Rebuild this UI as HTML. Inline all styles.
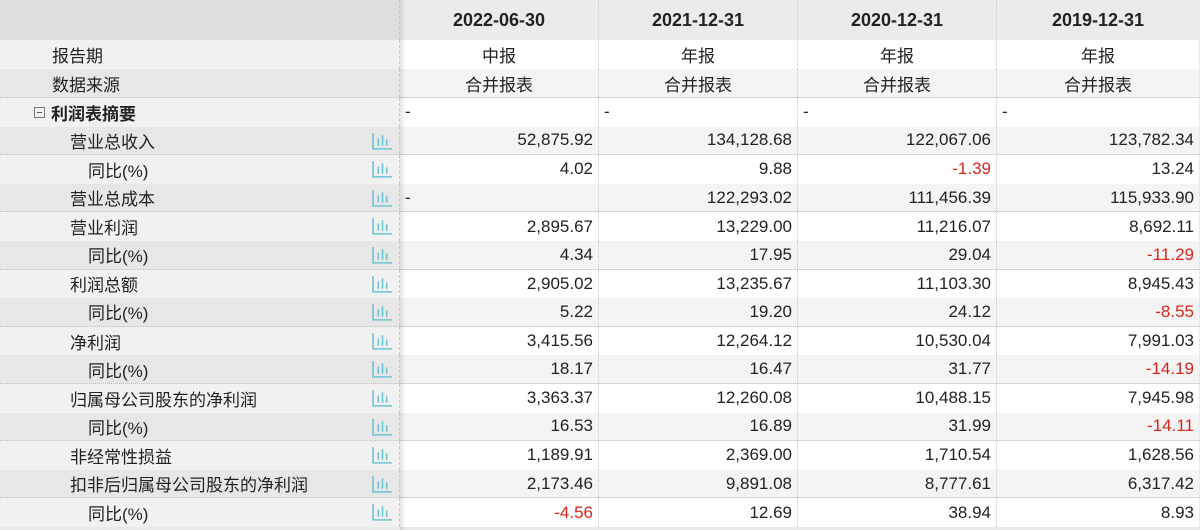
<!DOCTYPE html>
<html><head><meta charset="utf-8"><style>
*{margin:0;padding:0;box-sizing:border-box}
body{width:1200px;height:530px;background:#e9e9e9;font-family:"Liberation Sans","Noto Sans CJK SC",sans-serif;font-size:17px;color:#222;overflow:hidden;position:relative}
.r{position:absolute;left:0;width:1200px;display:flex}
.r>div{height:100%;display:flex;align-items:center}
.l{width:400px;position:relative;border-right:1px dashed #c8c8c8}
.c{width:199px;justify-content:flex-end;padding-right:5px;border-right:1px dotted #ccc}
.c:last-child{border-right:none;width:202px}
.cc{justify-content:center;padding-right:0}
.w .l{background:#f1f1f1}.w .c{background:#fff}
.g .l{background:#e7e7e7}.g .c{background:#f4f4f4}
.g{border-bottom:1px dotted #c0c0c0}
.neg{color:#d4261c}
.ic{position:absolute;left:372px;top:5px;width:21px;height:18px}
.dash{justify-content:flex-start!important;padding-left:5px}
#sh{position:absolute;left:400px;top:0;width:6px;height:530px;background:linear-gradient(90deg,rgba(0,0,0,.10),rgba(0,0,0,0))}
</style></head><body>
<div class="r" style="top:0;height:40px;font-weight:bold;font-size:18px">
<div class="l" style="background:#dedede"></div>
<div class="c cc" style="background:#ebebeb">2022-06-30</div><div class="c cc" style="background:#ebebeb">2021-12-31</div><div class="c cc" style="background:#ebebeb">2020-12-31</div><div class="c cc" style="background:#ebebeb">2019-12-31</div></div>
<div class="r w" style="top:40px;height:29px"><div class="l" style="padding-left:52px">报告期</div><div class="c cc">中报</div><div class="c cc">年报</div><div class="c cc">年报</div><div class="c cc">年报</div></div>
<div class="r g" style="top:69px;height:29px"><div class="l" style="padding-left:52px">数据来源</div><div class="c cc">合并报表</div><div class="c cc">合并报表</div><div class="c cc">合并报表</div><div class="c cc">合并报表</div></div>
<div id="rows"></div>
<div id="sh"></div>
<script>
var d=[
["利润表摘要",0,["-","-","-","-"]],
["营业总收入",1,["52,875.92","134,128.68","122,067.06","123,782.34"]],
["同比(%)",2,["4.02","9.88","-1.39","13.24"]],
["营业总成本",1,["-","122,293.02","111,456.39","115,933.90"]],
["营业利润",1,["2,895.67","13,229.00","11,216.07","8,692.11"]],
["同比(%)",2,["4.34","17.95","29.04","-11.29"]],
["利润总额",1,["2,905.02","13,235.67","11,103.30","8,945.43"]],
["同比(%)",2,["5.22","19.20","24.12","-8.55"]],
["净利润",1,["3,415.56","12,264.12","10,530.04","7,991.03"]],
["同比(%)",2,["18.17","16.47","31.77","-14.19"]],
["归属母公司股东的净利润",1,["3,363.37","12,260.08","10,488.15","7,945.98"]],
["同比(%)",2,["16.53","16.89","31.99","-14.11"]],
["非经常性损益",1,["1,189.91","2,369.00","1,710.54","1,628.56"]],
["扣非后归属母公司股东的净利润",1,["2,173.46","9,891.08","8,777.61","6,317.42"]],
["同比(%)",2,["-4.56","12.69","38.94","8.93"]]];
var ic='<svg class="ic" viewBox="0 0 20 17" fill="none" stroke="#6cc3d3" stroke-width="1.5"><path d="M1 1V16H19M6 6V13M10 3V13M14 7V13"/></svg>';
var h='';
d.forEach(function(r,i){
var top=98+i*28.6;var cls=i%2?'g':'w';
var lab;
if(r[1]==0)lab='<div class="l" style="padding-left:34px;font-weight:bold;font-size:17px"><span style="display:inline-block;width:11px;height:11px;border:1px solid #777;position:relative;margin-right:6px;font-size:0"><span style="position:absolute;left:2px;top:4px;width:5px;height:1px;background:#555"></span></span>'+r[0]+'</div>';
else lab='<div class="l" style="padding-left:'+(r[1]==1?70:88)+'px">'+r[0]+ic+'</div>';
h+='<div class="r '+cls+'" style="top:'+top+'px;height:28.6px">'+lab;
r[2].forEach(function(v){
if(v=="-")h+='<div class="c dash">-</div>';
else h+='<div class="c'+(v[0]=="-"?" neg":"")+'">'+v+'</div>';});
h+='</div>';});
document.getElementById('rows').innerHTML=h;
</script>
</body></html>
